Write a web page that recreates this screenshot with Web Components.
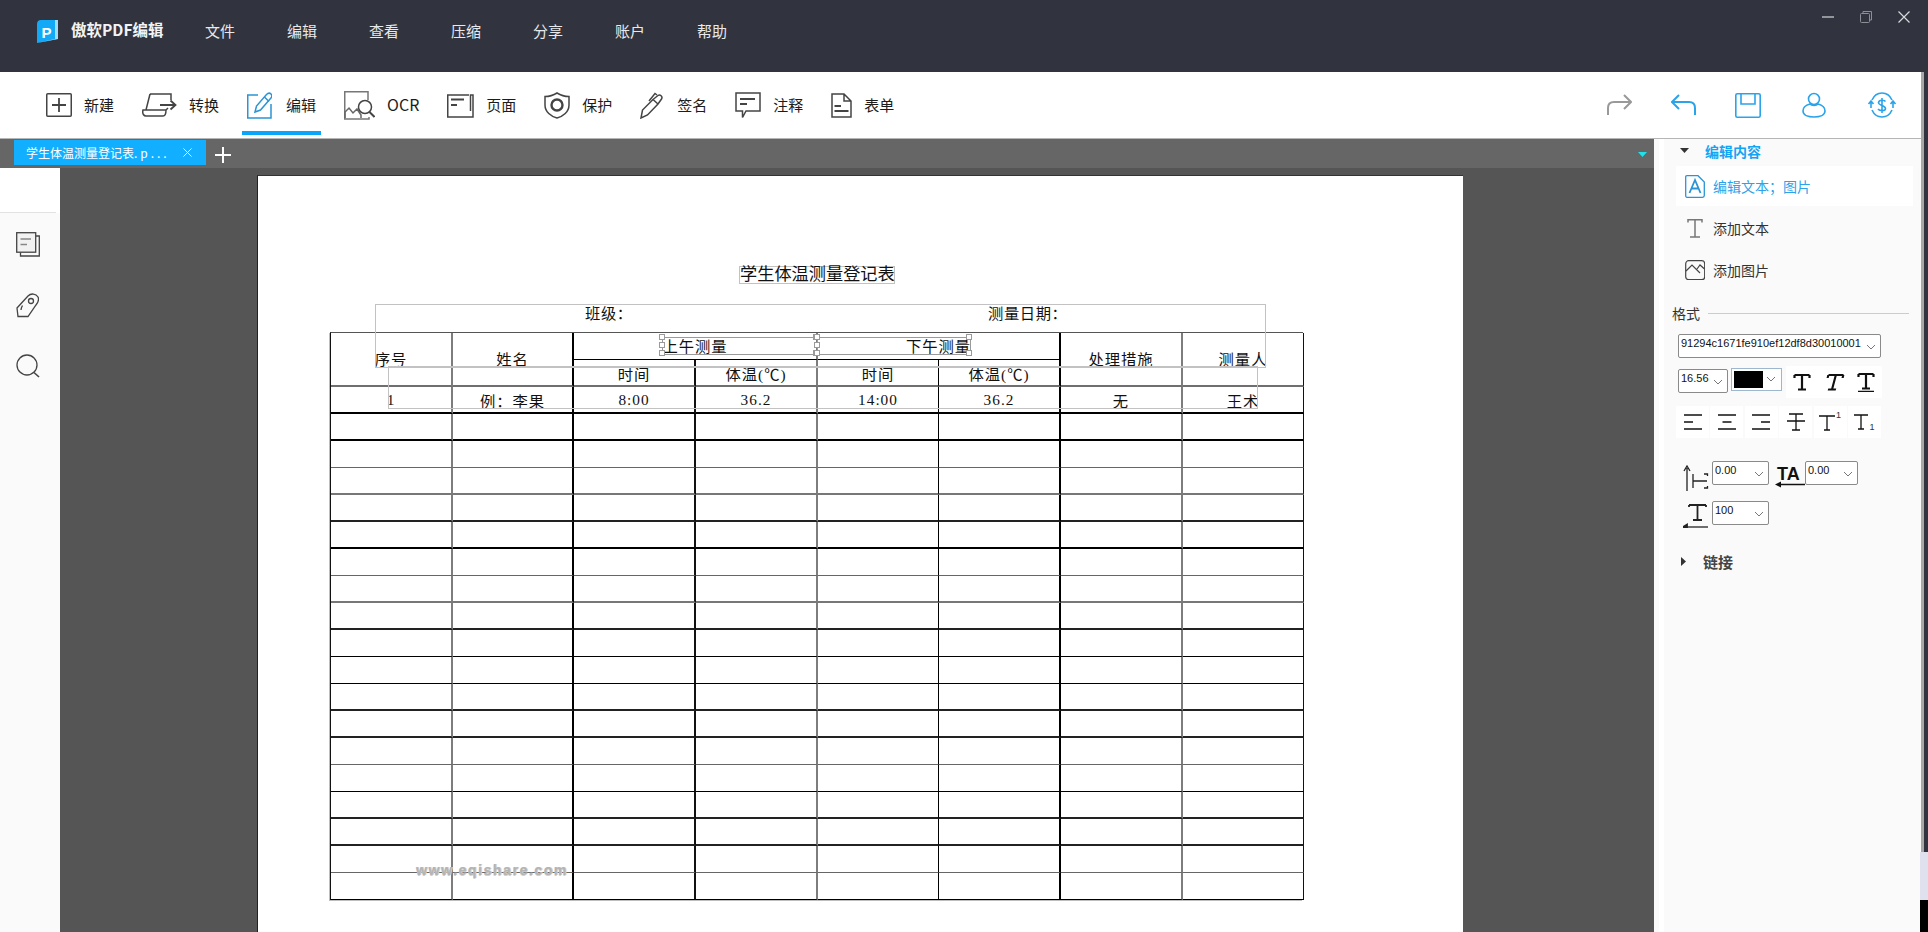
<!DOCTYPE html>
<html lang="zh">
<head>
<meta charset="utf-8">
<title>傲软PDF编辑</title>
<style>
    html, body {
        margin: 0;
        width: 1928px;
        height: 932px;
        overflow: hidden;
        background: #31343e;
        font-family: "Noto Sans CJK SC", sans-serif;
    }
</style>
</head>
<body>
<pdf-app>
    <title-bar slot="title"></title-bar>
    <tool-bar slot="tools"></tool-bar>
    <tab-bar slot="tabs"></tab-bar>
    <side-rail slot="rail"></side-rail>
    <pdf-page slot="page"></pdf-page>
    <props-panel slot="props"></props-panel>
    <window-edge slot="edge"></window-edge>
</pdf-app>

<script>
const UI_FONT = '"Noto Sans CJK SC", sans-serif';
const DOC_FONT = '"Liberation Serif", "Noto Sans CJK SC", serif';

class Base extends HTMLElement {
    constructor() {
        super();
        this._shadowRoot = this.attachShadow({ mode: 'open' });
        this._shadowRoot.innerHTML = this.render();
    }

    render() {
        return '';
    }
}

class PdfApp extends Base {
    render() {
        return `
        <style>
            :host { display: flex; flex-direction: column; width: 1928px; height: 932px; }
            .below { display: flex; flex: 1; min-height: 0; }
            .content { width: 1921px; display: flex; flex-direction: column; }
            .work { display: flex; flex: 1; min-height: 0; }
            .left { width: 1654px; display: flex; flex-direction: column; }
            .docs { display: flex; flex: 1; min-height: 0; }
        </style>
        <slot name="title"></slot>
        <div class="below">
            <div class="content">
                <slot name="tools"></slot>
                <div class="work">
                    <div class="left">
                        <slot name="tabs"></slot>
                        <div class="docs">
                            <slot name="rail"></slot>
                            <slot name="page"></slot>
                        </div>
                    </div>
                    <slot name="props"></slot>
                </div>
            </div>
            <slot name="edge"></slot>
        </div>`;
    }
}

class TitleBar extends Base {
    render() {
        const menus = ['文件', '编辑', '查看', '压缩', '分享', '账户', '帮助'];
        return `
        <style>
            :host { display: flex; height: 72px; background: #31343e; color: #e8e9ec; font: 15px ${UI_FONT}; }
            .logo { display: flex; margin: 20px 0 0 37px; height: 23px; }
            .name { margin: 14px 0 0 13px; width: 134px; font-size: 15.500px; font-weight: 700; line-height: 30px; color: #f2f3f5; white-space: nowrap; }
            .menu { display: flex; gap: 52px; padding-top: 16px; line-height: 30px; }
            .win { margin-left: auto; display: flex; gap: 26px; padding: 11px 18px 0 0; height: 12px; }
            svg { display: block; }
        </style>
        <svg class="logo" width="21" height="23" viewBox="0 0 21 23">
            <path d="M4 0H21V19L18 19.500 0 23V4C0 1.500 1.500 0 4 0Z" fill="#12a9f7"/>
            <path d="M18 0H21V19L0 23 18 19Z" fill="#9fdcfb"/>
            <text x="4.500" y="17.500" font-family="Liberation Sans" font-size="15" font-weight="700" fill="#fff">P</text>
        </svg>
        <div class="name">傲软PDF编辑</div>
        <div class="menu">${menus.map((m) => `<span>${m}</span>`).join('')}</div>
        <div class="win">
            <svg width="12" height="12" viewBox="0 0 12 12"><path d="M0 6H12" stroke="#b5b6bb" stroke-width="1.500"/></svg>
            <svg width="12" height="12" viewBox="0 0 12 12" fill="none" stroke="#8d8f96"><rect x=".5" y="2.500" width="9" height="9" rx="1"/><path d="M3 2.500V.5H11.500V9H9.500"/></svg>
            <svg width="12" height="12" viewBox="0 0 12 12"><path d="M.5 .5L11.500 11.500M11.500 .5L.5 11.500" stroke="#d8d9dc" stroke-width="1.200"/></svg>
        </div>`;
    }
}

class ToolItem extends Base {
    render() {
        return `
        <style>
            :host { display: flex; align-items: center; gap: 12px; position: relative; height: 66px; color: #1c1c1c; font: 15px ${UI_FONT}; }
            :host([active]) { gap: 14px; }
            :host([active])::after { content: ""; position: absolute; left: -5px; right: -5px; top: 59px; height: 4px; background: #09a6fb; }
            ::slotted(svg) { display: block; }
            .label { padding-bottom: 2px; }
        </style>
        <slot name="icon"></slot>
        <span class="label"><slot></slot></span>`;
    }
}

class ToolBar extends Base {
    render() {
        return `
        <style>
            :host { display: flex; align-items: center; height: 67px; box-sizing: border-box; background: #fff; border-bottom: 1px solid #b5b5b5; }
            .items { display: flex; gap: 28px; padding-left: 46px; }
            .right { margin-left: auto; display: flex; align-items: center; padding-right: 24px; gap: 39px; }
            svg { display: block; fill: none; }
            .d { stroke: #444; stroke-width: 1.500; }
            .b { stroke: #2ba3ea; stroke-width: 1.600; }
            .far { margin-left: 2px; }
            .ocr { font-size: 16px; }
        </style>
        <div class="items">
            <tool-item><svg slot="icon" class="d" width="26" height="24" viewBox="0 0 26 24"><rect x=".75" y=".75" width="24.500" height="22.500" rx="1"/><path d="M13 5V19M6 12H20" stroke-width="1.800"/></svg>新建</tool-item>
            <tool-item><svg slot="icon" class="d" width="35" height="24" viewBox="0 0 35 24"><path d="M8 1H29V7M8 1L4 17H1C0 21 2 23 4 23H21C23 23 24 21 24 17H4M24 17L26 15"/><path d="M18 12H33M28.500 7.500L33.500 12L28.500 16.500" stroke-width="1.800"/></svg>转换</tool-item>
            <tool-item active><svg slot="icon" width="25" height="27" viewBox="0 0 25 27" fill="none" stroke="#2b94d6" stroke-width="1.500"><path d="M11 3H.75V26H24V12"/><path d="M8 20L9.500 14L19.500 2.500C21 1 23 1 24 2S25 5 23.500 6.500L13.500 18Z"/><path d="M17.500 5L22 9.500"/></svg>编辑</tool-item>
            <tool-item><svg slot="icon" class="d" width="31" height="29" viewBox="0 0 31 29"><path d="M24 9V.75H.75V28H25V26" stroke="#777"/><path d="M1 27V21L5 17L9 22L13 18L17 24V27" stroke="#666"/><circle cx="21" cy="16" r="6.500"/><path d="M25.500 21L30.500 26" stroke-width="2"/></svg><span class="ocr">OCR</span></tool-item>
            <tool-item><svg slot="icon" class="d" width="27" height="25" viewBox="0 0 27 25"><path d="M22 2H.75V24H26V2H23.500V18"/><path d="M4 6.500H17M4 12H10" stroke-width="1.800"/></svg>页面</tool-item>
            <tool-item><svg slot="icon" class="d" width="26" height="27" viewBox="0 0 26 27"><path d="M13 1C9 3.500 5 4.500 1 4.500V13C1 20 7 24.500 13 26C19 24.500 25 20 25 13V4.500C21 4.500 17 3.500 13 1Z"/><circle cx="13" cy="13" r="5.500" stroke-width="2.400"/></svg>保护</tool-item>
            <tool-item><svg slot="icon" class="d" width="25" height="27" viewBox="0 0 25 27"><path d="M1 26L2.500 18L13 7.500L18 3.500C20 2 23 4.500 21.500 7L18 12L7.500 23Z"/><path d="M9 9L15 1.500L17 3"/><path d="M13 7.500L18 12"/></svg>签名</tool-item>
            <tool-item><svg slot="icon" class="d" width="26" height="27" viewBox="0 0 26 27"><path d="M1 1H25V19H11L7.500 25.500V19H1Z"/><path d="M5 7H20M5 12H12" stroke-width="1.800"/></svg>注释</tool-item>
            <tool-item><svg slot="icon" class="d" width="21" height="25" viewBox="0 0 21 25"><path d="M1 1H13L20 8V24H1ZM13 1V8H20"/><path d="M3.500 13H10M3.500 18H17.500" stroke-width="1.800"/></svg>表单</tool-item>
        </div>
        <div class="right">
            <svg width="25" height="22" viewBox="0 0 25 22" stroke="#999" stroke-width="2" fill="none"><path d="M1 21V14C1 10 3 8 7 8H23M17 1L24 8L17 15"/></svg>
            <svg width="25" height="22" viewBox="0 0 25 22" stroke="#2ba3ea" stroke-width="2" fill="none"><path d="M24 21V14C24 10 22 8 18 8H2M8 1L1 8L8 15"/></svg>
            <svg class="b" width="26" height="25" viewBox="0 0 26 25"><rect x=".8" y=".8" width="24.400" height="23.400" rx="1.500"/><path d="M6 1V11H20V1"/></svg>
            <svg class="b far" width="24" height="26" viewBox="0 0 24 26"><circle cx="12" cy="7" r="5.500"/><path d="M8 12C4 13 1 15.500 1 19C1 23 6 25 12 25S23 23 23 19C23 15.500 20 13 16 12C14.500 14 9.500 14 8 12Z"/></svg>
            <svg class="b far" width="30" height="26" viewBox="0 0 30 26"><path d="M5 8C7 3.500 10.500 1 15 1S23 3.500 25 8M25 18C23 22.500 19.500 25 15 25S7 22.500 5 18"/><path d="M18.500 9.500C17.500 8 12 7.500 11.500 10.500S18.500 13.500 18.500 16.500S12.500 19 11 17M15 6V21"/><path d="M1.500 12L4 9L6.500 12M4 9V16M23.500 12L26 9L28.500 12M26 9V16"/></svg>
        </div>`;
    }
}

class TabBar extends Base {
    render() {
        return `
        <style>
            :host { display: flex; height: 29px; background: #666; box-sizing: border-box; padding: 1px 0 0 14px; }
            .tab { width: 192px; height: 25px; box-sizing: border-box; background: #12aeff; color: #fff; display: flex; align-items: center; padding: 0 14px 0 12px; font: 12px ${UI_FONT}; white-space: nowrap; }
            .tab span { flex: 1; }
            .tab b { font-weight: 400; letter-spacing: 3px; }
            svg { display: block; }
            .plus { margin: 7px 0 0 9px; }
            .drop { margin: 12px 7px 0 auto; }
        </style>
        <div class="tab"><span>学生体温测量登记表<b>.p...</b></span>
            <svg width="9" height="9" viewBox="0 0 9 9"><path d="M.5 .5L8.500 8.500M8.500 .5L.5 8.500" stroke="#fff" stroke-width="1"/></svg>
        </div>
        <svg class="plus" width="16" height="16" viewBox="0 0 16 16"><path d="M8 0V16M0 8H16" stroke="#fff" stroke-width="2"/></svg>
        <svg class="drop" width="9" height="5" viewBox="0 0 9 5"><path d="M0 0H9L4.500 5Z" fill="#1fe3ea"/></svg>`;
    }
}

class SideRail extends Base {
    render() {
        return `
        <style>
            :host { display: block; width: 60px; height: 100%; background: #fafafa; }
            .top { height: 44px; background: #fff; border-bottom: 1px solid #e2e2e2; margin-right: 4px; box-shadow: 4px 0 0 #fff; }
            .icons { display: flex; flex-direction: column; gap: 36px; padding: 19px 0 0 16px; }
            svg { display: block; fill: none; stroke: #444; stroke-width: 1.300; }
        </style>
        <div class="top"></div>
        <div class="icons">
            <svg width="24" height="25" viewBox="0 0 24 25"><rect x=".7" y=".7" width="19" height="19.500" fill="#f2f2f2"/><path d="M20 4H23.300V24H4.500V20.500"/><path d="M4.500 7H15M4.500 12.500H11" stroke="#888" stroke-width="1.500"/></svg>
            <svg width="23" height="25" viewBox="0 0 23 25"><path d="M1 15L12 3C15 0 20 .5 22 4C23.500 7 22 9.500 20 12L12 23.500H2Z"/><circle cx="15" cy="8" r="2.500"/><path d="M5 17C5 15 6 13.500 6.500 12.500"/></svg>
            <svg width="24" height="24" viewBox="0 0 24 24"><circle cx="11" cy="11" r="10"/><path d="M18 18.500L23 23" stroke-width="1.600"/></svg>
        </div>`;
    }
}

class MeasureTable extends Base {
    render() {
        const cols = [122, 121, 122, 122, 121, 122, 122, 121];
        const colLine = ['2px solid #7d7d7d', '2px solid #000', '2px solid #111', '2px solid #7d7d7d', '1px solid #000', '2px solid #000', '2px solid #7d7d7d', '1px solid #111'];
        // bottom edge of each body row, as they come in the scanned form
        const black2 = '2px solid #000';
        const dark2 = '2px solid #222';
        const grey2 = '2px solid #777';
        const grey1 = '1px solid #666';
        const thin = '1px solid #000';
        const rowLine = [
            black2, black2, grey1, grey2, dark2, black2, grey1, grey2, dark2, thin,
            thin, dark2, dark2, grey1, thin, dark2, dark2, grey1, thin,
        ];
        const first = ['1', '例：李果', '8:00', '36.2', '14:00', '36.2', '无', '王术'];
        const head = '2px solid #6f6f6f';
        const cell = (text, col, extra, bottom) => `<div class="c ${extra.k || ''}" style="grid-column:${extra.c};grid-row:${extra.r};border-right:${colLine[col]};border-bottom:${bottom}">${text}</div>`;
        let html = '';
        html += cell('序号', 0, { c: '1', r: '1 / span 2', k: 'up' }, head);
        html += cell('姓名', 1, { c: '2', r: '1 / span 2', k: 'up' }, head);
        html += cell('上午测量', 3, { c: '3 / span 2', r: '1', k: 'up' }, thin);
        html += cell('下午测量', 5, { c: '5 / span 2', r: '1', k: 'up' }, thin);
        html += cell('处理措施', 6, { c: '7', r: '1 / span 2', k: 'up' }, head);
        html += cell('测量人', 7, { c: '8', r: '1 / span 2', k: 'up' }, head);
        ['时间', '体温(℃)', '时间', '体温(℃)'].forEach((t, i) => {
            html += cell(t, i + 2, { c: `${i + 3}`, r: '2' }, head);
        });
        for (let r = 0; r < 19; r += 1) {
            for (let c = 0; c < 8; c += 1) {
                html += cell(r === 0 ? first[c] : '', c, { c: `${c + 1}`, r: `${r + 3}` }, rowLine[r]);
            }
        }
        return `
        <style>
            :host { display: block; width: 973px; }
            .grid {
                display: grid;
                grid-template-columns: ${cols.join('px ')}px;
                grid-auto-rows: 27px;
                border-left: 1px solid #111;
                border-top: 1px solid #555;
                box-shadow: -1px 1px 0 #bdbdbd;
                box-sizing: border-box;
                font: 15.300px ${DOC_FONT};
                color: #111;
            }
            .c { box-sizing: border-box; display: flex; align-items: center; justify-content: center; letter-spacing: 1px; white-space: nowrap; }
            .up { padding-bottom: 2px; }
        </style>
        <div class="grid">${html}</div>`;
    }
}

class TextBox extends Base {
    render() {
        return `
        <style>
            :host { position: absolute; box-sizing: border-box; border: 1px solid #c2c2c2; font: 15.300px ${DOC_FONT}; color: #111; white-space: nowrap; }
        </style>
        <slot></slot>`;
    }
}

class SelBox extends Base {
    render() {
        const handles = ['0,0', '0,50%', '0,100%', '100%,0', '100%,100%'];
        return `
        <style>
            :host { position: absolute; box-sizing: border-box; border: 1px solid #9a9a9a; }
            i { position: absolute; width: 6px; height: 6px; margin: -4px 0 0 -4px; box-sizing: border-box; background: #fff; border: 1px solid #9a9a9a; }
        </style>
        ${handles.map((h) => {
            const [l, t] = h.split(',');
            return `<i style="left:${l};top:${t}"></i>`;
        }).join('')}`;
    }
}

class PdfPage extends Base {
    render() {
        return `
        <style>
            :host { display: block; flex: 1; background: #555; padding: 7px 0 0 197px; overflow: hidden; height: 100%; box-sizing: border-box; }
            .sheet { position: relative; box-sizing: border-box; width: 1206px; height: 800px; background: #fff; border-left: 1px solid #222; border-top: 1px solid #333; padding: 156px 0 0 72px; }
            .mark { position: absolute; left: 158px; top: 686px; font: 700 14px "Liberation Sans", sans-serif; letter-spacing: 1.600px; color: #b4b4b4; text-shadow: 0 1px 0 #d0d0d0, 1px 0 0 #d0d0d0; white-space: nowrap; }
            .t { display: block; text-align: center; font-size: 17.200px; line-height: 16px; }
            .a { position: absolute; top: 0; line-height: 18px; letter-spacing: .6px; }
        </style>
        <div class="sheet">
            <measure-table></measure-table>
            <text-box style="left:481px;top:90px;width:156px;height:18px"><span class="t">学生体温测量登记表</span></text-box>
            <text-box style="left:117px;top:128px;width:891px;height:64px"><span class="a" style="left:209px">班级：</span><span class="a" style="left:612px">测量日期：</span></text-box>
            <text-box style="left:130px;top:190px;width:870px;height:43px"></text-box>
            <sel-box style="left:404px;top:161px;width:156px;height:18px"></sel-box>
            <sel-box style="left:559px;top:161px;width:154px;height:18px"></sel-box>
            <div class="mark">www.eqishare.com</div>
        </div>`;
    }
}

class SelectBox extends Base {
    render() {
        return `
        <style>
            :host { display: flex; box-sizing: border-box; background: #fff; border: 1px solid #8a8a8a; border-radius: 2px; font: 11px "Liberation Sans", sans-serif; color: #111; padding: 2px 0 0 2px; justify-content: space-between; white-space: nowrap; }
            svg { margin: 7px 4px 0 0; display: block; flex: none; }
        </style>
        <span><slot></slot></span>
        <svg width="10" height="6" viewBox="0 0 10 6" fill="none"><path d="M1 1L5 5L9 1" stroke="#777"/></svg>`;
    }
}

class FmtButton extends Base {
    render() {
        return `
        <style>
            :host { display: flex; align-items: center; justify-content: center; background: #fff; width: 32px; height: 32px; font: 9px "Liberation Sans", sans-serif; color: #333; }
            ::slotted(svg) { display: block; }
        </style>
        <slot></slot>`;
    }
}

class PanelRow extends Base {
    render() {
        return `
        <style>
            :host { display: flex; align-items: center; height: 40px; margin: 0 8px 2px 22px; padding-left: 9px; gap: 8px; font: 14px ${UI_FONT}; color: #333; }
            :host([active]) { background: #fff; color: #2ba3ea; }
            ::slotted(svg) { display: block; width: 20px; }
        </style>
        <slot name="icon"></slot>
        <slot></slot>`;
    }
}

class PropsPanel extends Base {
    render() {
        const t = '<path d="M1.500 2H16.500M1.500 2V5M16.500 2V5M9 2V16.500M5 16.500H13" stroke="#111" stroke-width="2.200" fill="none"/>';
        const thin = 'fill="none" stroke="#111" stroke-width="1.300"';
        return `
        <style>
            :host { display: block; width: 267px; height: 100%; font: 14px ${UI_FONT}; background: linear-gradient(to right, #fafafa 5px, #fff 5px, #fff 10px, #fafafa 10px); overflow: hidden; }
            .head { display: flex; align-items: center; height: 27px; box-sizing: border-box; padding: 0 0 4px 26px; gap: 16px; font-weight: 700; }
            .head.on { color: #12a5f5; height: 27px; }
            .head.off { color: #444; padding: 0 0 0 27px; margin-top: 23px; gap: 17px; font-size: 15px; }
            .fmt { display: flex; align-items: center; gap: 8px; height: 20px; margin: 13px 12px 11px 18px; color: #333; }
            .fmt i { flex: 1; height: 1px; background: #ccc; }
            .line { display: flex; margin-left: 24px; }
            .btns { display: flex; }
            .aligns { display: flex; gap: 1.400px; margin: 8px 0 0 22px; }
            .aligns fmt-button { width: 33px; }
            .swatch { display: flex; margin: -1px 4px 0 3px; width: 51px; height: 23px; box-sizing: border-box; border: 1px solid #9db7cf; background: #fff; padding: 2px; justify-content: space-between; }
            .swatch b { width: 29px; background: #000; }
            .swatch svg { margin: 5px 3px 0 0; }
            .sp { display: flex; align-items: flex-start; height: 24px; margin-left: 29px; }
            svg { display: block; flex: none; }
        </style>
        <div class="head on">
            <svg width="9" height="5" viewBox="0 0 9 5"><path d="M0 0H9L4.500 5Z" fill="#333"/></svg>编辑内容
        </div>
        <panel-row active>
            <svg slot="icon" width="20" height="23" viewBox="0 0 20 23" fill="none" stroke="#2b94d6" stroke-width="1.300"><path d="M2 .7H13L19.300 7V20.500C19.300 21.500 18.500 22.300 17.500 22.300H2C1 22.300 .7 21.500 .7 20.500V2C.7 1 1 .7 2 .7Z"/><path d="M4.500 18L10 5L15.500 18M6.500 13.500H13.500" stroke-width="1.800"/></svg>
            编辑文本；图片
        </panel-row>
        <panel-row>
            <svg slot="icon" width="20" height="19" viewBox="0 0 20 19" fill="none" stroke="#777" stroke-width="1.500"><path d="M3 3.500V.8H17V3.500M10 .8V18M5 18H15"/></svg>
            添加文本
        </panel-row>
        <panel-row>
            <svg slot="icon" width="20" height="20" viewBox="0 0 20 20" fill="none" stroke="#444" stroke-width="1.200"><rect x=".7" y=".7" width="19" height="19" rx="3"/><path d="M1 11L7 5L15 13M12 9L15 5L19.500 9"/></svg>
            添加图片
        </panel-row>
        <div class="fmt">格式<i></i></div>
        <div class="line">
            <select-box style="width:203px;height:24px">91294c1671fe910ef12df8d30010001</select-box>
        </div>
        <div class="line" style="margin-top:8px">
            <select-box style="width:50px;height:24px;margin-top:3px">16.56</select-box>
            <div class="swatch" style="margin-top:2px"><b></b><svg width="10" height="6" viewBox="0 0 10 6" fill="none"><path d="M1 1L5 5L9 1" stroke="#777"/></svg></div>
            <div class="btns">
                <fmt-button><svg width="18" height="18" viewBox="0 0 18 18">${t}</svg></fmt-button>
                <fmt-button><svg width="18" height="18" viewBox="0 0 18 18" style="transform:skewX(-15deg)">${t}</svg></fmt-button>
                <fmt-button><svg width="18" height="20" viewBox="0 0 18 20">${t}<path d="M1 19.500H17" stroke="#111" stroke-width="1.500"/></svg></fmt-button>
            </div>
        </div>
        <div class="aligns">
            <fmt-button><svg width="18" height="16" viewBox="0 0 18 16" ${thin}><path d="M0 1H18M0 8H9M0 15H18"/></svg></fmt-button>
            <fmt-button><svg width="18" height="16" viewBox="0 0 18 16" ${thin}><path d="M0 1H18M4.500 8H13.500M0 15H18"/></svg></fmt-button>
            <fmt-button><svg width="18" height="16" viewBox="0 0 18 16" ${thin}><path d="M0 1H18M9 8H18M0 15H18"/></svg></fmt-button>
            <fmt-button><svg width="18" height="18" viewBox="0 0 18 18" ${thin}><path d="M2 1H16M9 1V17M5 17H13M0 8H18"/></svg></fmt-button>
            <fmt-button><svg width="16" height="17" viewBox="0 0 16 17" ${thin}><path d="M0 2H16M8 2V16M5 16H11"/></svg><span style="margin:-14px 0 0 1px">1</span></fmt-button>
            <fmt-button><svg width="14" height="16" viewBox="0 0 14 16" ${thin}><path d="M0 1H14M7 1V15M4 15H10"/></svg><span style="margin:9px 0 0 1px">1</span></fmt-button>
        </div>
        <div class="sp" style="margin-top:23px">
            <svg width="26" height="26" viewBox="0 0 26 26" style="margin:4px 3px 0 0" fill="none" stroke="#222" stroke-width="1.300"><path d="M4 26V3M1 6L4 1L7 6"/><path d="M10 9V23M10 16H24M21 9H24.500V11M21 23H24.500V21"/></svg>
            <select-box style="width:57px;height:24px">0.00</select-box>
            <svg width="30" height="27" viewBox="0 0 30 27" style="margin:3px 0 0 6px;overflow:visible" fill="none"><text x="2" y="16" font-family="Liberation Sans" font-weight="700" font-size="18" fill="#111">TA</text><path d="M4 20.500H30" stroke="#111" stroke-width="1.500"/><path d="M0 20.500L6 17.500V23.500Z" fill="#111"/></svg>
            <select-box style="width:53px;height:24px">0.00</select-box>
        </div>
        <div class="sp" style="margin-top:16px">
            <svg width="26" height="25" viewBox="0 0 26 25" style="margin:2px 3px 0 0" fill="none" stroke="#222" stroke-width="1.800"><path d="M6 2H23M6 2V4M23 2V4M14.500 2V17M10 17H19"/><path d="M0 24H25" stroke-width="1.300"/><path d="M0 24L4 21.500V24Z" fill="#111"/></svg>
            <select-box style="width:57px;height:24px">100</select-box>
        </div>
        <div class="head off">
            <svg width="5" height="9" viewBox="0 0 5 9"><path d="M0 0V9L5 4.500Z" fill="#333"/></svg>链接
        </div>`;
    }
}

class WindowEdge extends Base {
    render() {
        return `
        <style>
            :host { display: flex; flex-direction: column; width: 7px; height: 100%; }
            .bar { height: 780px; background: linear-gradient(to right, #a8a8a8 3px, #31343e 3px); }
            .lilac { height: 48px; margin-left: -1px; background: #dfe1ee; }
            .end { flex: 1; margin-left: -1px; background: #000; }
        </style>
        <div class="bar"></div><div class="lilac"></div><div class="end"></div>`;
    }
}

customElements.define('pdf-app', PdfApp);
customElements.define('title-bar', TitleBar);
customElements.define('tool-item', ToolItem);
customElements.define('tool-bar', ToolBar);
customElements.define('tab-bar', TabBar);
customElements.define('side-rail', SideRail);
customElements.define('measure-table', MeasureTable);
customElements.define('text-box', TextBox);
customElements.define('sel-box', SelBox);
customElements.define('pdf-page', PdfPage);
customElements.define('select-box', SelectBox);
customElements.define('fmt-button', FmtButton);
customElements.define('panel-row', PanelRow);
customElements.define('props-panel', PropsPanel);
customElements.define('window-edge', WindowEdge);
</script>
</body>
</html>
